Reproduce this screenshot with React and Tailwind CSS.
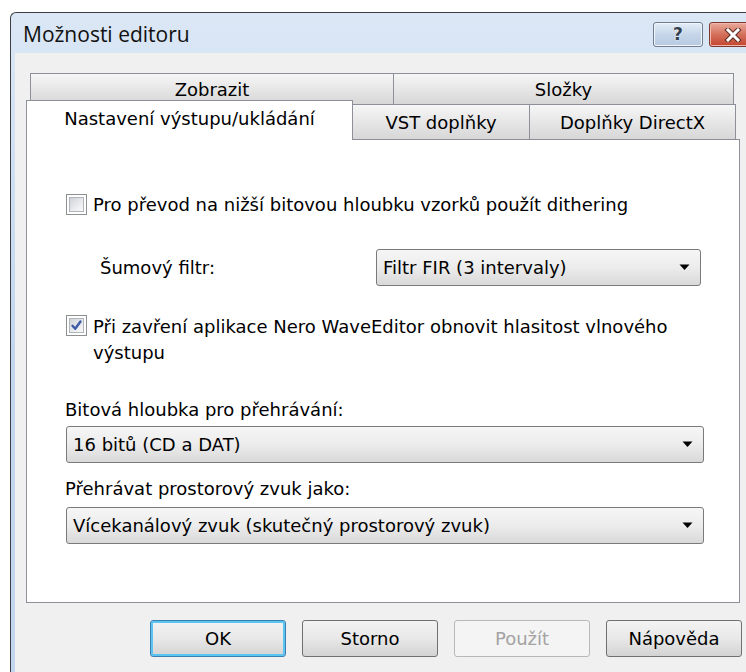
import React from "react";

const ui = "font-['DejaVu_Sans',sans-serif] text-[18px] text-black";

function CheckBox({ checked }) {
  return (
    <div className="w-[21px] h-[21px] shrink-0 border border-[#8e8f8f] bg-white p-[2px]">
      <div className="w-full h-full border border-[#b0b5bc] bg-gradient-to-br from-[#cfd3d8] via-[#e6e8eb] to-[#f9f9f9] flex items-center justify-center">
        {checked && (
          <svg width="13" height="13" viewBox="0 0 13 13">
            <path d="M2.5 6.8 L5.2 9.8 L10.5 2.5" fill="none" stroke="#3d5ba6" strokeWidth="2.4" strokeLinecap="round" strokeLinejoin="round" />
          </svg>
        )}
      </div>
    </div>
  );
}

function Combo({ value, className }) {
  return (
    <div className={`h-[37px] flex items-center justify-between pl-[6px] pr-[10px] rounded-[3px] border border-[#7a7a7a] bg-gradient-to-b from-[#f6f6f6] via-[#ececec] to-[#d9d9d9] ${className}`}>
      <span className="whitespace-nowrap">{value}</span>
      <svg width="11" height="7" viewBox="0 0 11 7">
        <path d="M0.5 0.5 H10.5 L5.5 6 Z" fill="#000" />
      </svg>
    </div>
  );
}

function Button({ children, focus, disabled }) {
  let look = "border-[#707070] bg-gradient-to-b from-[#f3f3f3] via-[#e8e8e8] to-[#d3d3d3]";
  if (focus) look = "border-[#3c7fb1] bg-gradient-to-b from-[#f3f3f3] via-[#e8e8e8] to-[#d3d3d3] shadow-[inset_0_0_0_2px_#5cc4f0]";
  if (disabled) look = "border-[#b5b9bc] bg-[#f4f4f4] text-[#a3a3a3]";
  return (
    <div className={`w-[136px] h-[37px] rounded-[3px] border flex items-center justify-center ${look}`}>
      {children}
    </div>
  );
}

function Tab({ label, className }) {
  return (
    <div className={`flex items-center justify-center border-t border-r border-[#8d9098] bg-gradient-to-b from-[#f6f6f6] to-[#d7d7d7] ${className}`}>
      {label}
    </div>
  );
}

export default function App() {
  return (
    <div className="w-[746px] h-[672px] overflow-hidden bg-white pl-[10px] pt-[12px]">
      <div className="w-[760px] h-[700px] flex flex-col border-l border-t border-[#3b3f45] rounded-tl-[6px] bg-gradient-to-b from-[#dbe7f5] via-[#c1d6ee] to-[#c1d6ee] overflow-hidden">
        {/* title bar */}
        <div className="h-[40px] flex items-start shrink-0">
          <div className="flex-1 pl-[12px] pt-[7px] font-['Open_Sans',sans-serif] text-[21px] leading-[28px] text-[#111]">
            Možnosti editoru
          </div>
          <div className="flex gap-[6px] pt-[9px] pr-[13px]">
            <div className="w-[50px] h-[25px] rounded-[3px] border border-[#6f7d90] bg-gradient-to-b from-[#e4edf7] via-[#c6d6e9] to-[#b5c9e0] flex items-center justify-center shadow-[inset_0_0_0_1px_#f2f6fb]">
              <span className="font-['DejaVu_Sans',sans-serif] font-bold text-[17px] leading-none text-[#33404f] [text-shadow:0_0_2px_#fff]">?</span>
            </div>
            <div className="w-[48px] h-[25px] rounded-[3px] border border-[#7c3a2e] bg-gradient-to-b from-[#e9a99b] via-[#d3705b] to-[#c3452f] flex items-center justify-center shadow-[inset_0_0_0_1px_#f0b7aa]">
              <svg width="18" height="14" viewBox="0 0 18 14">
                <path d="M4 2 L14 12 M14 2 L4 12" stroke="#5a2a22" strokeWidth="5" strokeLinecap="square" />
                <path d="M4 2 L14 12 M14 2 L4 12" stroke="#ffffff" strokeWidth="3" strokeLinecap="square" />
              </svg>
            </div>
          </div>
        </div>

        {/* client area */}
        <div className={`flex-1 ml-[4px] bg-[#f0f0f0] ${ui}`}>
          {/* tab strip, row one */}
          <div className="mt-[20px] ml-[15px] flex h-[31px] border-l border-[#8d9098]">
            <Tab label="Zobrazit" className="w-[363px]" />
            <Tab label="Složky" className="w-[340px]" />
          </div>
          {/* tab strip, row two */}
          <div className="ml-[11px] flex h-[35px]">
            <div className="relative z-10 mt-[-4px] h-[40px] w-[327px] flex items-center justify-center pb-[4px] bg-white border-t border-l border-r border-[#8d9098]">
              Nastavení výstupu/ukládání
            </div>
            <Tab label="VST doplňky" className="w-[177px]" />
            <Tab label="Doplňky DirectX" className="w-[206px]" />
          </div>

          {/* page of the selected tab */}
          <div className="ml-[11px] w-[714px] h-[464px] bg-white border border-[#8d9098] pl-[39px] pr-[35px] pt-[53px]">
            <div className="flex items-center gap-[6px] h-[23px]">
              <CheckBox />
              <span className="whitespace-nowrap">Pro převod na nižší bitovou hloubku vzorků použít dithering</span>
            </div>

            <div className="mt-[33px] flex items-center">
              <span className="pl-[34px] w-[310px]">Šumový filtr:</span>
              <Combo value="Filtr FIR (3 intervaly)" className="w-[325px]" />
            </div>

            <div className="mt-[28px] flex items-start gap-[6px]">
              <div className="pt-[1px]">
                <CheckBox checked />
              </div>
              <span className="leading-[26px] w-[612px]">
                Při zavření aplikace Nero WaveEditor obnovit hlasitost vlnového výstupu
              </span>
            </div>

            <div className="mt-[32px] leading-[24px] -ml-[1px]">Bitová hloubka pro přehrávání:</div>
            <Combo value="16 bitů (CD a DAT)" className="mt-[4px] w-[638px]" />

            <div className="mt-[14px] leading-[24px] -ml-[1px]">Přehrávat prostorový zvuk jako:</div>
            <Combo value="Vícekanálový zvuk (skutečný prostorový zvuk)" className="mt-[6px] w-[638px]" />
          </div>

          {/* dialog buttons */}
          <div className="mt-[17px] pl-[135px] flex gap-[16px]">
            <Button focus>OK</Button>
            <Button>Storno</Button>
            <Button disabled>Použít</Button>
            <Button>Nápověda</Button>
          </div>
        </div>
      </div>
    </div>
  );
}
